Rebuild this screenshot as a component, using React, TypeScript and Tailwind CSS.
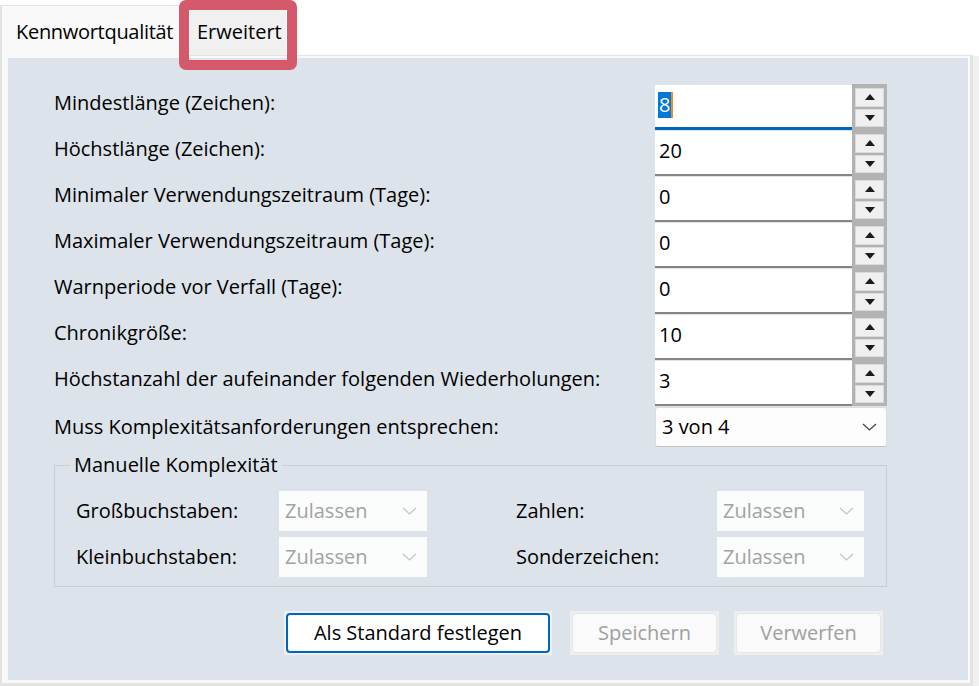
import React from 'react'

const FONT = { fontFamily: '"Open Sans", "Noto Sans", Arial, sans-serif' }

const spinRows = [
  { label: 'Mindestlänge (Zeichen):', value: '8', focused: true },
  { label: 'Höchstlänge (Zeichen):', value: '20' },
  { label: 'Minimaler Verwendungszeitraum (Tage):', value: '0' },
  { label: 'Maximaler Verwendungszeitraum (Tage):', value: '0' },
  { label: 'Warnperiode vor Verfall (Tage):', value: '0' },
  { label: 'Chronikgröße:', value: '10' },
  { label: 'Höchstanzahl der aufeinander folgenden Wiederholungen:', value: '3' },
]

function Chevron({ color }: { color: string }) {
  return (
    <svg width="15" height="8" viewBox="0 0 15 8" fill="none">
      <path d="M1 1 L7.5 7 L14 1" stroke={color} strokeWidth="1.2" />
    </svg>
  )
}

function Tri({ up }: { up?: boolean }) {
  return (
    <svg width="10" height="6" viewBox="0 0 10 6">
      <polygon points={up ? '5,0 10,6 0,6' : '0,0 10,0 5,6'} fill="#1b1b1b" />
    </svg>
  )
}

function SpinBox({ value, focused }: { value: string; focused?: boolean }) {
  return (
    <div className="flex h-[46px]">
      <div
        className={
          'flex-1 bg-white mt-[1px] pl-[3px] pt-[5px] ' +
          (focused ? 'border-b-[3px] border-[#0067c0]' : 'border-b-2 border-[#858585]')
        }
      >
        {focused ? (
          <span className="inline-block bg-[#0078d7] text-white px-[1px] leading-[26px] border-r-2 border-[#f08a24]">{value}</span>
        ) : (
          <span className="inline-block px-[1px] leading-[26px]">{value}</span>
        )}
      </div>
      <div className="w-[35px] bg-[#b3b3b3] flex flex-col px-[3px] pt-[4px] pb-[3px] gap-[2px]">
        <div className="flex-1 bg-[#f0f0f0] border border-[#dadada] flex items-center justify-center"><Tri up /></div>
        <div className="flex-1 bg-[#f0f0f0] border border-[#dadada] flex items-center justify-center"><Tri /></div>
      </div>
    </div>
  )
}

function Disabled() {
  return (
    <div className="h-[40px] bg-[#fbfcfc] flex items-center justify-between pl-[6px] pr-[10px] text-[#a2a2a2]">
      <span>Zulassen</span>
      <Chevron color="#c4c4c4" />
    </div>
  )
}

export default function App() {
  return (
    <div className="w-[979px] h-[686px] bg-white overflow-hidden relative text-[20px] text-black" style={FONT}>
      {/* Reiter */}
      <div className="flex h-[56px] items-end">
        <div className="w-[181px] h-[51px] bg-[#f9f9f9] border-l-2 border-t border-[#e3e3e3] flex items-center pl-[14px] pt-[1px] tracking-[-0.3px]">
          Kennwortqualität
        </div>
        <div className="flex-1 h-full border-b border-[#e3e3e3] flex items-end">
          <div className="ml-[9px] w-[96px] h-[45px] bg-[#f0f0f0] flex items-center pl-[7px] pb-[1px]">Erweitert</div>
        </div>
        <div className="w-[6px] h-full" />
      </div>
      <div className="absolute left-[179px] top-0 w-[118px] h-[70px] border-[10px] border-[#d45a6b] rounded-[7px]" />

      <div className="flex">
        <div className="w-[973px] h-[630px] bg-[#f9f9f9] border-l-2 border-r-[3px] border-b-[3px] border-[#e3e3e3] pl-[6px] pt-[2px] pr-[2px] pb-[3px]">
          <div className="h-full bg-[#dde3ea] pl-[46px] pr-[81px] pt-[26px]">
            <div className="grid grid-cols-[1fr_232px]">
              {spinRows.map(r => (
                <React.Fragment key={r.label}>
                  <div className="h-[46px] pt-[6px] leading-[26px]">{r.label}</div>
                  <SpinBox value={r.value} focused={r.focused} />
                </React.Fragment>
              ))}
              <div className="h-[40px] mt-[1px] flex items-center">Muss Komplexitätsanforderungen entsprechen:</div>
              <div className="h-[40px] mt-[1px] bg-[#fdfdfd] border border-[#dcdcdc] border-b-[#c2c2c2] rounded-[3px] flex items-center justify-between pl-[6px] pr-[9px]">
                <span>3 von 4</span>
                <Chevron color="#444" />
              </div>
            </div>

            <fieldset className="mt-[6px] border border-[#c9ced4] pb-[9px]">
              <legend className="ml-[15px] px-[4px] leading-[24px]">Manuelle Komplexität</legend>
              <div className="grid grid-cols-[203px_148px_89px_201px_147px] gap-y-[6px] items-center pt-[14px] pl-[21px]">
                <div>Großbuchstaben:</div>
                <Disabled />
                <div />
                <div>Zahlen:</div>
                <Disabled />
                <div>Kleinbuchstaben:</div>
                <Disabled />
                <div />
                <div>Sonderzeichen:</div>
                <Disabled />
              </div>
            </fieldset>

            <div className="flex justify-end pr-[4px] mt-[24px]">
              <div className="w-[268px] h-[44px] p-[2px] bg-[#eef0f2]">
                <div className="h-full rounded-[4px] border-2 border-[#0067c0] bg-white flex items-center justify-center">
                  Als Standard festlegen
                </div>
              </div>
              <div className="ml-[18px] w-[149px] h-[44px] p-[2px] bg-[#eeeeee]">
                <div className="h-full rounded-[4px] border border-[#e6e6e6] bg-[#fafafa] flex items-center justify-center text-[#a0a0a0]">
                  Speichern
                </div>
              </div>
              <div className="ml-[15px] w-[149px] h-[44px] p-[2px] bg-[#eeeeee]">
                <div className="h-full rounded-[4px] border border-[#e6e6e6] bg-[#fafafa] flex items-center justify-center text-[#a0a0a0]">
                  Verwerfen
                </div>
              </div>
            </div>
          </div>
        </div>
        <div className="w-[6px] h-[630px] bg-[#f0f0f0]" />
      </div>
    </div>
  )
}
